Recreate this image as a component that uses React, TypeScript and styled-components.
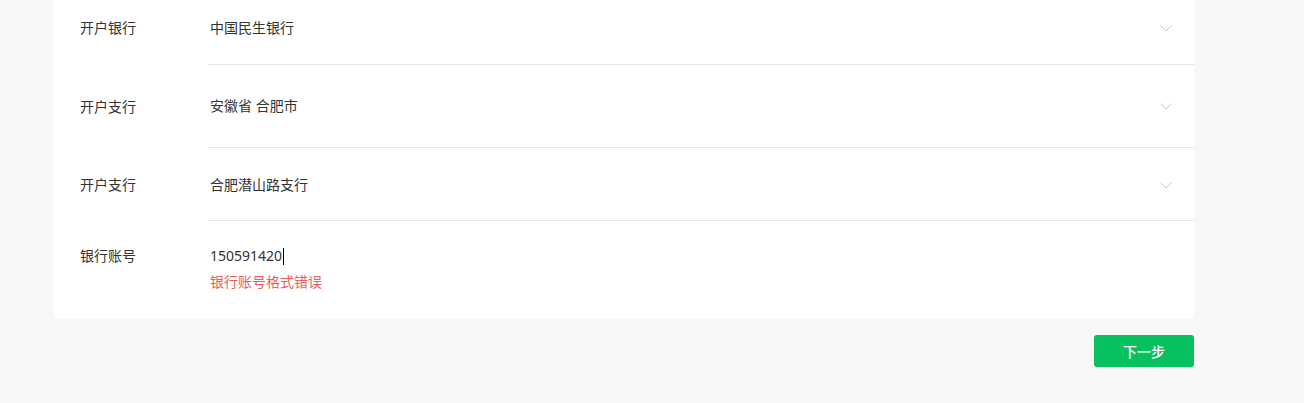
import styled, { createGlobalStyle } from "styled-components";

const GlobalStyle = createGlobalStyle`
  html, body {
    margin: 0;
    padding: 0;
    background: #f7f7f7;
    font-family: "Noto Sans", "Noto Sans CJK SC", sans-serif;
  }
`;

const Page = styled.div`
  width: 1140px;
  margin-left: 54px;
  display: flex;
  flex-direction: column;
`;

const Card = styled.div`
  background: #fff;
  border-radius: 0 0 4px 4px;
  padding-left: 26px;
`;

const Row = styled.div`
  display: flex;
`;

const Label = styled.div<{ $top: number }>`
  width: 128px;
  flex-shrink: 0;
  padding-top: ${(p) => p.$top}px;
  font-size: 14px;
  line-height: 20px;
  color: #333;
`;

const Field = styled.div<{ $top: number; $bottom: number; $last?: boolean }>`
  flex: 1;
  display: flex;
  justify-content: space-between;
  align-items: flex-start;
  padding: ${(p) => p.$top}px 22px ${(p) => p.$bottom}px 2px;
  border-bottom: ${(p) => (p.$last ? "none" : "1px solid #e5e5e5")};
`;

const Value = styled.div`
  font-size: 14px;
  line-height: 20px;
  color: #333;
`;

const Input = styled.div`
  display: flex;
  align-items: center;
  font-size: 14px;
  line-height: 20px;
  color: #333;
`;

const Caret = styled.span`
  display: inline-block;
  width: 1px;
  height: 17px;
  background: #000;
  margin-left: 1px;
`;

const ErrorText = styled.div`
  margin-top: 6px;
  font-size: 14px;
  line-height: 20px;
  color: #f05a5a;
`;

const Chevron = styled.svg`
  margin-top: 7px;
  display: block;
`;

const Footer = styled.div`
  display: flex;
  justify-content: flex-end;
  padding-top: 16px;
`;

const NextButton = styled.button`
  width: 100px;
  height: 32px;
  border: none;
  border-radius: 3px;
  background: #07c160;
  color: #fff;
  font-family: inherit;
  font-size: 14px;
  font-weight: 500;
  cursor: pointer;
`;

const Arrow = () => (
  <Chevron width="12" height="7" viewBox="0 0 12 7">
    <path d="M0.5 0.5 L6 6 L11.5 0.5" fill="none" stroke="#c8c8c8" strokeWidth="1" />
  </Chevron>
);

const rows = [
  { label: "开户银行", value: "中国民生银行", labelTop: 18, top: 18, bottom: 26 },
  { label: "开户支行", value: "安徽省 合肥市", labelTop: 32, top: 31, bottom: 31 },
  { label: "开户支行", value: "合肥潜山路支行", labelTop: 27, top: 27, bottom: 25 },
];

export default function App() {
  return (
    <>
      <GlobalStyle />
      <Page>
        <Card>
          {rows.map((r, i) => (
            <Row key={i}>
              <Label $top={r.labelTop}>{r.label}</Label>
              <Field $top={r.top} $bottom={r.bottom}>
                <Value>{r.value}</Value>
                <Arrow />
              </Field>
            </Row>
          ))}
          <Row>
            <Label $top={25}>银行账号</Label>
            <Field $top={25} $bottom={27} $last>
              <div>
                <Input>
                  150591420
                  <Caret />
                </Input>
                <ErrorText>银行账号格式错误</ErrorText>
              </div>
            </Field>
          </Row>
        </Card>
        <Footer>
          <NextButton>下一步</NextButton>
        </Footer>
      </Page>
    </>
  );
}
